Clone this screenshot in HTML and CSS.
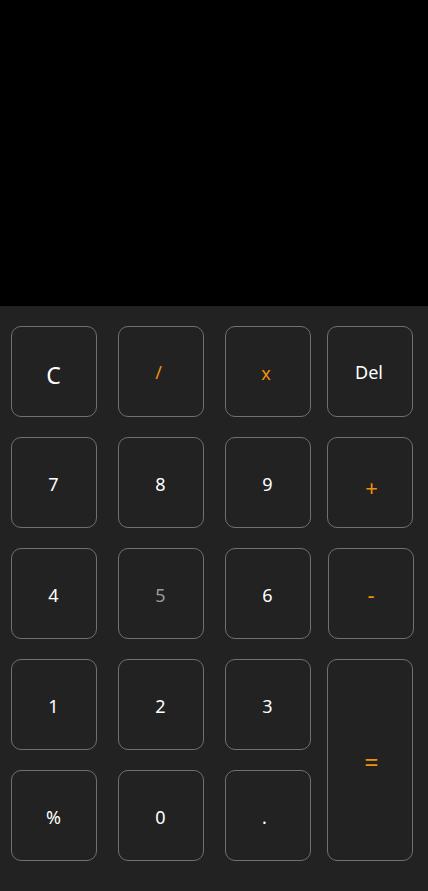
FILE: index.html
```html
<!DOCTYPE html>
<html lang="en">
<head>
<meta charset="utf-8">
<title>Calculator</title>
<link rel="stylesheet" href="styles.css">
</head>
<body>
<div class="app">
  <div class="display"></div>
  <div class="keys">
    <button class="key big">C</button>
    <button class="key op slash">/</button>
    <button class="key op small">x</button>
    <button class="key del">Del</button>

    <button class="key">7</button>
    <button class="key">8</button>
    <button class="key">9</button>
    <button class="key op plus">+</button>

    <button class="key">4</button>
    <button class="key dim">5</button>
    <button class="key">6</button>
    <button class="key op shift">-</button>

    <button class="key">1</button>
    <button class="key">2</button>
    <button class="key">3</button>
    <button class="key op tall">=</button>

    <button class="key">%</button>
    <button class="key">0</button>
    <button class="key dot">.</button>
  </div>
</div>
</body>
</html>
```
FILE: styles.css
```css
html, body {
  margin: 0;
  padding: 0;
  background: #222222;
  height: 100%;
}
.app {
  display: flex;
  flex-direction: column;
  height: 891px;
  font-family: "Noto Sans", "Open Sans", sans-serif;
}
.display {
  height: 306px;
  background: #000;
  flex: none;
}
.keys {
  flex: 1;
  background: #222222;
  display: grid;
  grid-template-columns: 107px 107px 102px 101px;
  grid-auto-rows: 91px;
  row-gap: 20px;
  padding: 20px 0 0 11px;
  align-content: start;
}
.key {
  width: 86px;
  height: 91px;
  box-sizing: border-box;
  border: 1px solid #707070;
  border-radius: 10px;
  background: transparent;
  color: #ffffff;
  font-family: "Noto Sans", "Open Sans", sans-serif;
  font-size: 18px;
  padding: 2px 1px 0 0;
  display: flex;
  align-items: center;
  justify-content: center;
}
.big {
  font-size: 23px;
  padding-top: 6px;
}
.op {
  color: #f0900c;
}
.slash {
  padding-top: 0;
  padding-right: 5px;
}
.small {
  padding-top: 2px;
  padding-right: 4px;
}
.del {
  padding-top: 0;
  padding-right: 2px;
}
.plus {
  font-size: 22px;
  padding-top: 8px;
  padding-left: 4px;
}
.shift {
  margin-left: 1px;
  font-size: 22px;
  padding-top: 0;
  padding-left: 1px;
}
.dim {
  color: #9a9a9a;
}
.dot {
  padding-top: 3px;
  padding-right: 7px;
}
.tall {
  grid-row: span 2;
  height: 202px;
  font-size: 25px;
  padding-top: 4px;
  padding-left: 4px;
}
```
